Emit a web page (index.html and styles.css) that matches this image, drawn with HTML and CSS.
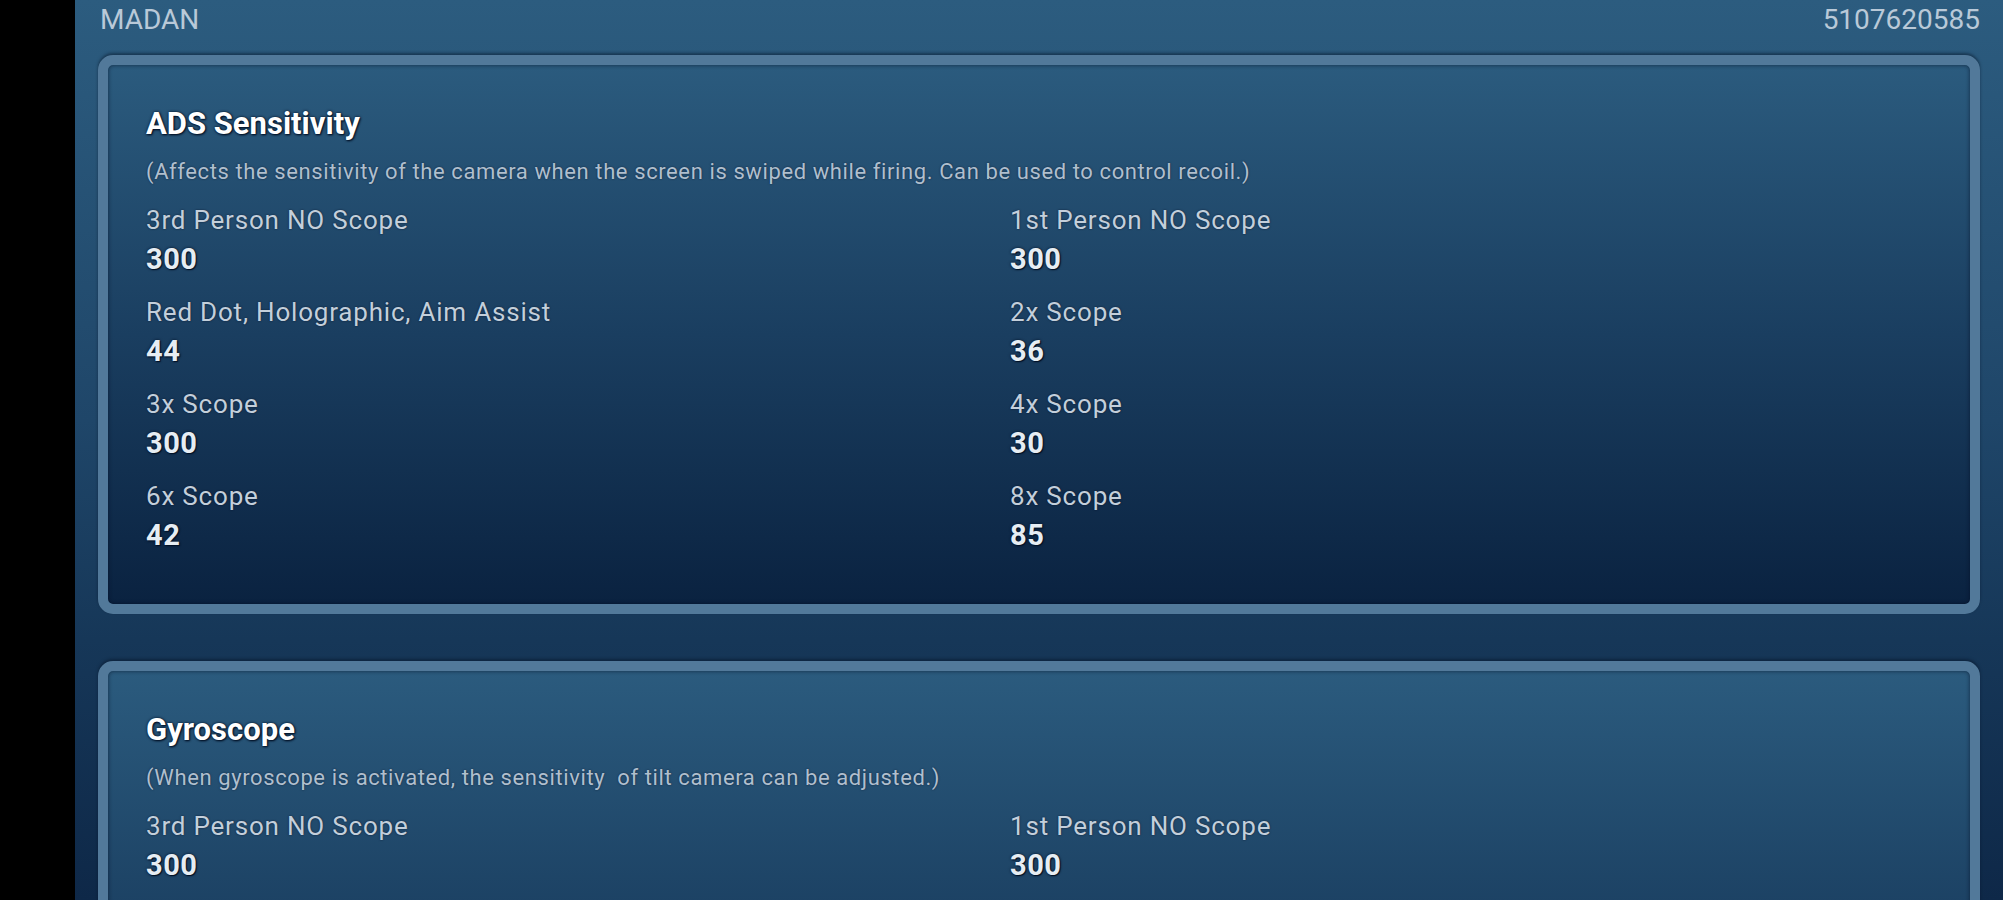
FILE: index.html
```html
<!DOCTYPE html>
<html lang="en">
<head>
<meta charset="utf-8">
<title>Sensitivity Settings</title>
<link rel="stylesheet" href="styles.css">
</head>
<body>
<div class="screen">
  <aside class="rail"></aside>
  <main class="main">
    <header class="topbar">
      <span class="player">MADAN</span>
      <span class="uid">5107620585</span>
    </header>

    <section class="card">
      <h2 class="card-title">ADS Sensitivity</h2>
      <p class="card-desc">(Affects the sensitivity of the camera when the screen is swiped while firing. Can be used to control recoil.)</p>
      <div class="grid">
        <div class="item"><div class="label">3rd Person NO Scope</div><div class="value">300</div></div>
        <div class="item"><div class="label">1st Person NO Scope</div><div class="value">300</div></div>
        <div class="item"><div class="label">Red Dot, Holographic, Aim Assist</div><div class="value">44</div></div>
        <div class="item"><div class="label">2x Scope</div><div class="value">36</div></div>
        <div class="item"><div class="label">3x Scope</div><div class="value">300</div></div>
        <div class="item"><div class="label">4x Scope</div><div class="value">30</div></div>
        <div class="item"><div class="label">6x Scope</div><div class="value">42</div></div>
        <div class="item"><div class="label">8x Scope</div><div class="value">85</div></div>
      </div>
    </section>

    <section class="card">
      <h2 class="card-title">Gyroscope</h2>
      <p class="card-desc">(When gyroscope is activated, the sensitivity&nbsp; of tilt camera can be adjusted.)</p>
      <div class="grid">
        <div class="item"><div class="label">3rd Person NO Scope</div><div class="value">300</div></div>
        <div class="item"><div class="label">1st Person NO Scope</div><div class="value">300</div></div>
      </div>
    </section>
  </main>
</div>
</body>
</html>
```

FILE: styles.css
```css
* { box-sizing: border-box; }

html, body {
  margin: 0;
  padding: 0;
  background: #000;
  height: 100%;
  overflow: hidden;
}

body {
  font-family: Roboto, "Liberation Sans", Arial, sans-serif;
}

.screen {
  display: flex;
  min-height: 100vh;
}

.rail {
  width: 75px;
  flex: 0 0 75px;
  background: #000;
}

.main {
  flex: 1;
  padding: 0 23px 0 23px;
  background: linear-gradient(180deg, #2c5c7f 0px, #1f4669 420px, #163758 640px, #0e2848 900px);
  background-size: 100% 900px;
  background-repeat: no-repeat;
  background-color: #0e2848;
}

.topbar {
  display: flex;
  justify-content: space-between;
  align-items: flex-start;
  height: 55px;
  padding: 4px 0 0 2px;
  font-size: 28px;
  line-height: 32px;
  color: #b9c9d8;
}

.card {
  border: 10px solid #52799a;
  border-radius: 15px;
  padding: 42px 38px 53px 38px;
  margin-bottom: 47px;
  background-image: linear-gradient(180deg, #2b5b7e 0px, #1a3e60 270px, #0a2240 540px);
  background-size: 100% 540px;
  background-repeat: no-repeat;
  background-color: #0a2240;
  box-shadow: inset 0 0 4px rgba(0, 10, 30, 0.6), 0 -2px 3px rgba(5, 20, 40, 0.5);
}

.card-title {
  margin: 0;
  font-size: 31px;
  line-height: 34px;
  font-weight: 700;
  color: #ffffff;
  text-shadow: 0 0 3px #021025, 1px 1px 2px #021025;
}

.card-desc {
  margin: 19px 0 0 0;
  font-size: 22px;
  line-height: 24px;
  letter-spacing: 0.6px;
  color: #b0bfce;
  text-shadow: 0 0 2px rgba(0, 10, 30, 0.6);
}

.grid {
  display: grid;
  grid-template-columns: 864px 1fr;
  row-gap: 22px;
  margin-top: 21px;
}

.label {
  font-size: 26px;
  line-height: 30px;
  letter-spacing: 0.8px;
  color: #c3cfdb;
  text-shadow: 0 0 2px rgba(0, 10, 30, 0.7);
}

.value {
  margin-top: 8px;
  font-size: 29px;
  line-height: 32px;
  letter-spacing: 0.5px;
  font-weight: 700;
  color: #e6edf3;
  text-shadow: 0 0 3px #021025, 1px 1px 1px #021025;
}
```
